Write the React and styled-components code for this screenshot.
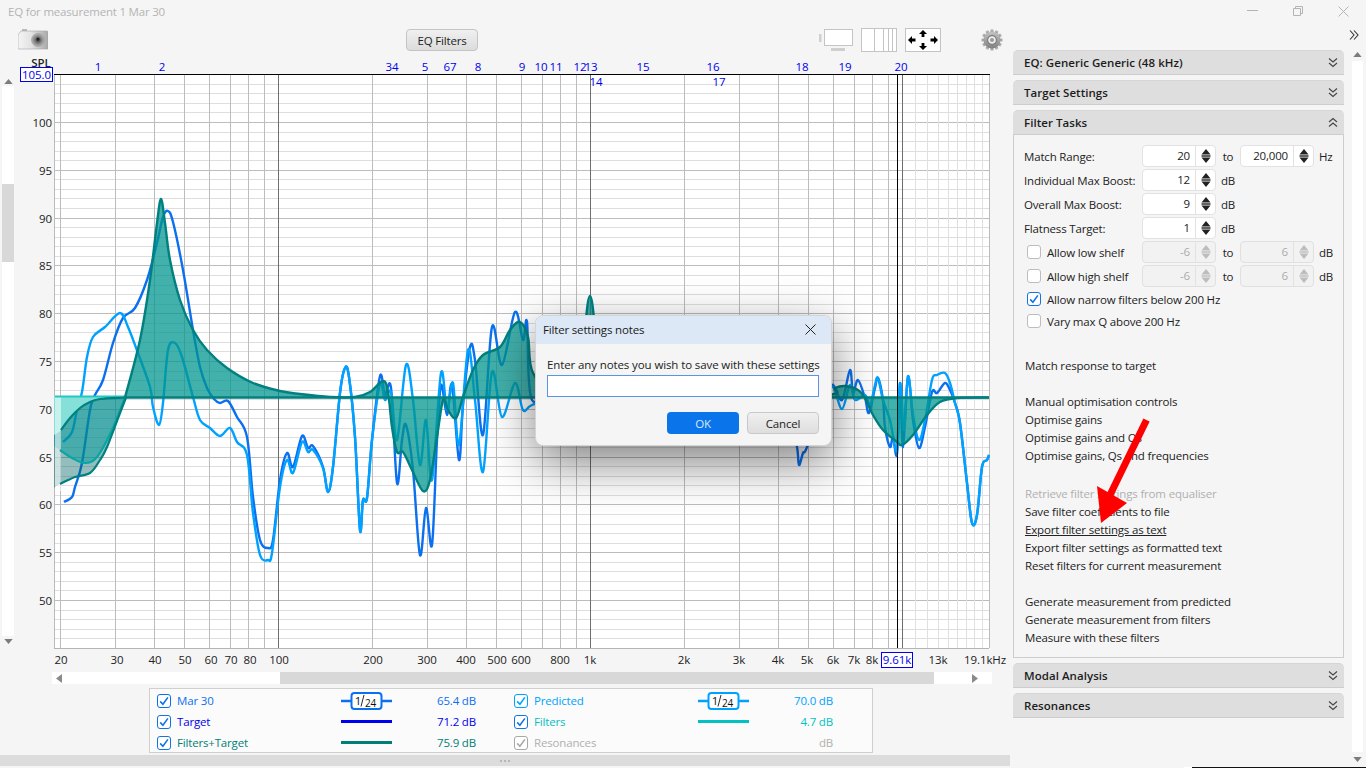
import React from 'react';
import styled, { createGlobalStyle } from 'styled-components';

const Global = createGlobalStyle`
  html, body { margin: 0; padding: 0; background: #f5f5f5; overflow: hidden; }
  * { box-sizing: border-box; }
`;

const FONT = `"Open Sans", "Noto Sans", "Liberation Sans", sans-serif`;

const Page = styled.div`
  position: relative;
  width: 1366px;
  height: 768px;
  overflow: hidden;
  background: #f5f5f5;
  font: 11.5px ${FONT};
  letter-spacing: -0.17px;
  color: #222;
  display: flex;
  flex-direction: column;
`;
const TitleBar = styled.div`
  height: 22px;
  flex: none;
  display: flex;
  align-items: center;
  justify-content: space-between;
  padding: 0 17px 0 8px;
`;
const Title = styled.div`
  color: #b4b4b4;
  font-size: 11.5px;
  letter-spacing: -0.2px;
  padding-top: 1px;
`;
const WinControls = styled.div`
  display: flex;
  align-items: center;
  gap: 35px;
  color: #b0b0b0;
`;
const Main = styled.div`
  flex: 1;
  display: flex;
  min-height: 0;
`;
const LeftColumn = styled.div`
  width: 1010px;
  flex: none;
  display: flex;
  flex-direction: column;
`;
const Toolbar = styled.div`
  height: 36px;
  flex: none;
  display: flex;
  align-items: flex-start;
  padding: 6px 0 0 18px;
`;
const ToolButton = styled.div`
  margin-left: 358px;
  margin-top: 1px;
  width: 72px;
  height: 22px;
  border: 1px solid #c4c4c4;
  border-radius: 4px;
  background: linear-gradient(#f0f0f0, #dcdcdc);
  display: flex;
  align-items: center;
  justify-content: center;
  color: #222;
`;
const MonitorSlot = styled.div`
  margin-left: 341px;
  width: 34px;
  height: 24px;
`;
const ColumnsSlot = styled.div`
  margin-left: 8px;
  width: 36px;
  height: 24px;
`;
const MoveSlot = styled.div`
  margin-left: 8px;
  width: 36px;
  height: 24px;
  background: #fff;
  border: 1px solid #c4c4c4;
`;
const GearSlot = styled.div`
  margin-left: 40px;
  margin-top: 1px;
  width: 22px;
  height: 22px;
`;
const ChartRow = styled.div`
  height: 612px;
  flex: none;
  display: flex;
`;
const VScroll = styled.div`
  width: 14px;
  flex: none;
  padding: 18px 0 24px 2px;
  display: flex;
  flex-direction: column;
  align-items: stretch;
`;
const ArrowCell = styled.div`
  height: 10px;
  flex: none;
  display: flex;
  align-items: center;
  justify-content: center;
`;
const VTrack = styled.div`
  flex: 1;
  background: #fff;
  padding-top: 98px;
`;
const VThumb = styled.div`
  height: 78px;
  background: #d8d8d8;
`;
const HScroll = styled.div`
  margin: 2px 0 0 52px;
  width: 940px;
  height: 12px;
  flex: none;
  display: flex;
  align-items: center;
  background: #fff;
`;
const HArrow = styled.div`
  width: 14px;
  flex: none;
  display: flex;
  justify-content: center;
`;
const HThumb = styled.div`
  height: 12px;
  width: 654px;
  margin: 0 34px 0 214px;
  background: #d8d8d8;
`;
const Legend = styled.div`
  margin: 4px 0 0 149px;
  width: 724px;
  height: 65px;
  flex: none;
  border: 1px solid #cfcfcf;
  background: #fbfbfb;
  padding: 1px 0 0 7px;
  display: grid;
  grid-template-columns: 319px 319px;
  grid-auto-rows: 21px;
  column-gap: 38px;
`;
const LegendEntry = styled.div`
  display: grid;
  grid-template-columns: 14px 170px 51px 84px;
  column-gap: 0;
  align-items: center;
  color: ${p => p.$color};
`;
const LegendName = styled.span`
  padding-left: 6px;
`;
const LegendValue = styled.span`
  text-align: right;
`;
const LineSwatch = styled.div`
  height: 3px;
  background: ${p => p.$color};
`;
const Splitter = styled.div`
  margin-top: 2px;
  height: 11px;
  flex: none;
  background: #dcdcdc;
  display: flex;
  align-items: center;
  justify-content: center;
  gap: 2px;
`;
const SplitDot = styled.i`
  width: 2px;
  height: 2px;
  border-radius: 50%;
  background: #aaa;
`;

const Sidebar = styled.div`
  flex: 1;
  display: flex;
  min-width: 0;
`;
const Panels = styled.div`
  margin: 28px 0 0 3px;
  width: 331px;
  display: flex;
  flex-direction: column;
  gap: 5px;
`;
const PanelHeader = styled.div`
  height: 25px;
  background: #dedede;
  border-radius: 5px 5px 0 0;
  border-top: 1px solid #d6d6d6;
  border-bottom: 1px solid #cdcdcd;
  display: flex;
  align-items: center;
  justify-content: space-between;
  padding: 0 6px 0 11px;
  font-weight: 600;
  font-size: 11.5px;
  letter-spacing: 0.05px;
  color: #1c1c1c;
`;
const PanelBody = styled.div`
  height: 523px;
  border: 1px solid #cdcdcd;
  border-top: none;
  padding: 9px 0 0 10px;
`;
const FieldRow = styled.div`
  height: 24px;
  display: flex;
  align-items: center;
`;
const FieldLabel = styled.div`
  width: 118px;
  flex: none;
  white-space: nowrap;
`;
const CheckLabel = styled.label`
  width: 118px;
  flex: none;
  display: flex;
  align-items: center;
  gap: 6px;
  padding-left: 3px;
  white-space: nowrap;
`;
const CheckRow = styled.label`
  height: 22px;
  display: flex;
  align-items: center;
  gap: 6px;
  padding-left: 3px;
`;
const SpinBox = styled.div`
  width: 74px;
  height: 22px;
  flex: none;
  display: flex;
  border: 1px solid ${p => (p.$off ? '#e0e0e0' : '#e2e2e2')};
  border-radius: 4px;
  background: ${p => (p.$off ? '#f2f2f2' : '#fff')};
  color: ${p => (p.$off ? '#ababab' : '#222')};
`;
const SpinValue = styled.div`
  flex: 1;
  text-align: right;
  line-height: 20px;
  padding-right: 5px;
`;
const SpinArrows = styled.div`
  width: 20px;
  flex: none;
  border-left: 1px solid #e2e2e2;
  display: flex;
  align-items: center;
  justify-content: center;
  color: ${p => (p.$off ? '#bdbdbd' : '#222')};
`;
const ToWord = styled.div`
  width: 24px;
  flex: none;
  text-align: center;
`;
const Unit = styled.div`
  margin-left: 5px;
`;
const ActionGroup = styled.div`
  margin-top: ${p => p.$gap}px;
  margin-left: 1px;
`;
const Action = styled.div`
  height: 18px;
  line-height: 18px;
  white-space: nowrap;
  color: ${p => (p.$off ? '#b0b0b0' : '#222')};
  text-decoration: ${p => (p.$link ? 'underline' : 'none')};
`;
const SideScroll = styled.div`
  width: 22px;
  display: flex;
  flex-direction: column;
  align-items: flex-start;
  padding: 7px 0 0 8px;
`;
const Collapse = styled.div`
  height: 14px;
  margin-left: -3px;
  display: flex;
  justify-content: center;
`;
const SideArrow = styled.div`
  width: 11px;
  height: 14px;
  margin-top: ${p => p.$top || 0}px;
  display: flex;
  align-items: center;
  justify-content: center;
`;
const SideTrack = styled.div`
  width: 11px;
  height: 691px;
  background: #fff;
`;
const TaskbarEdge = styled.div`
  position: absolute;
  right: 0;
  bottom: 0;
  width: 174px;
  height: 1px;
  background: #111;
  box-shadow: -8px 0 0 #fff;
`;

const Dialog = styled.div`
  position: absolute;
  left: 535px;
  top: 315px;
  width: 297px;
  height: 131px;
  border-radius: 8px;
  background: #f5f5f5;
  border: 1px solid #d4d4d4;
  box-shadow: 0 16px 48px rgba(0, 0, 0, 0.5);
  overflow: hidden;
  display: flex;
  flex-direction: column;
`;
const DialogTitle = styled.div`
  height: 28px;
  flex: none;
  background: #dce8f6;
  display: flex;
  align-items: center;
  justify-content: space-between;
  padding: 0 15px 1px 7px;
  font-size: 11.5px;
  color: #1a1a1a;
`;
const DialogBody = styled.div`
  padding: 13px 12px 0 11px;
`;
const DialogLabel = styled.div`
  line-height: 16px;
  white-space: nowrap;
  letter-spacing: -0.11px;
`;
const NotesInput = styled.div`
  margin-top: 2px;
  height: 22px;
  background: #fff;
  border: 1.5px solid #5a94e6;
`;
const DialogButtons = styled.div`
  margin-top: 15px;
  display: flex;
  justify-content: flex-end;
  gap: 8px;
`;
const DialogButton = styled.div`
  width: 72px;
  height: 22px;
  border-radius: 4px;
  display: flex;
  align-items: center;
  justify-content: center;
  ${p =>
    p.$primary
      ? 'background: #0a74ea; color: #dbe9fb;'
      : 'background: linear-gradient(#f0f0f0, #dedede); border: 1px solid #c8c8c8; color: #222;'}
`;
const ArrowOverlay = styled.svg`
  position: absolute;
  left: 1090px;
  top: 410px;
`;

const AxisText = styled.text`
  font: 11.5px ${FONT};
  letter-spacing: -0.1px;
  fill: ${p => p.$fill || '#222'};
  text-anchor: ${p => p.$anchor || 'middle'};
`;
const SplText = styled(AxisText)`
  font-weight: 600;
`;

/* ---------- chart geometry ---------- */
const fx = f => 278 + (Math.log10(f) - 2) * 312;
const dy = db => 122 + (100 - db) * 9.56;
const L = 54, R = 989, T = 74, B = 648;

function smooth(pts) {
  let d = `M${pts[0][0]},${pts[0][1]}`;
  for (let i = 0; i < pts.length - 1; i++) {
    const p0 = pts[i - 1] || pts[i], p1 = pts[i], p2 = pts[i + 1], p3 = pts[i + 2] || p2;
    const c1 = [p1[0] + (p2[0] - p0[0]) / 6, p1[1] + (p2[1] - p0[1]) / 6];
    const c2 = [p2[0] - (p3[0] - p1[0]) / 6, p2[1] - (p3[1] - p1[1]) / 6];
    d += `C${c1[0].toFixed(1)},${c1[1].toFixed(1)} ${c2[0].toFixed(1)},${c2[1].toFixed(1)} ${p2[0]},${p2[1]}`;
  }
  return d;
}

const darkPts = [[64,502],[72,497],[75,487],[82,463],[90,410],[95,395],[103,380],[113,343],[123,318],[135,308],[147,280],[157,243],[163,217],[168,211],[173,222],[183,270],[193,330],[200,367],[207,388],[214,399],[220,403],[228,401],[237,417],[247,437],[253,497],[260,540],[268,548],[273,540],[280,480],[287,453],[293,467],[302,436],[308,448],[313,446],[323,467],[328,492],[333,467],[340,393],[345,368],[349,377],[355,437],[360,530],[363,500],[367,498],[372,440],[380,376],[385,395],[391,388],[397,483],[402,440],[406,425],[413,470],[420,555],[426,508],[432,545],[437,440],[441,385],[447,415],[452,385],[459,460],[463,405],[470,347],[475,360],[483,435],[492,327],[502,365],[515,312],[523,340],[527,322],[532,400],[560,380],[590,390],[620,390],[700,400],[790,420],[797,447],[799,465],[803,453],[807,447],[825,395],[833,385],[842,400],[850,370],[853,393],[858,380],[865,398],[869,413],[875,388],[878,378],[883,400],[885,427],[890,447],[893,437],[897,454],[900,383],[903,447],[908,377],[913,420],[919,448],[925,427],[932,392],[937,393],[945,383],[950,390],[955,403],[960,423],[967,483],[972,523],[977,515],[982,467],[987,460],[989,455]];

const lightPts = [[63,442],[72,432],[77,410],[82,392],[87,357],[93,337],[105,327],[120,313],[128,327],[138,353],[150,387],[153,407],[159,425],[163,403],[168,350],[175,343],[182,357],[193,397],[200,420],[210,428],[220,436],[230,428],[237,442],[247,455],[253,513],[260,555],[268,560],[272,553],[280,487],[287,460],[293,473],[302,442],[308,452],[313,450],[323,468],[328,492],[333,467],[340,393],[345,368],[349,377],[355,437],[360,530],[363,500],[367,498],[372,440],[380,384],[385,400],[391,392],[397,440],[406,365],[413,400],[420,465],[426,420],[432,480],[441,373],[447,410],[453,383],[459,445],[468,350],[475,400],[483,472],[492,372],[502,417],[515,383],[523,410],[532,405],[560,395],[590,400],[620,395],[700,405],[790,425],[797,440],[805,430],[825,395],[833,387],[842,409],[850,385],[855,400],[865,395],[870,405],[875,385],[878,378],[883,400],[890,420],[897,450],[900,383],[904,430],[908,376],[913,415],[919,440],[925,420],[932,380],[937,375],[945,373],[950,383],[955,403],[960,423],[967,483],[972,523],[977,515],[982,467],[987,460],[989,455]];

const tealPts = [[125,397.5],[140,340],[150,280],[157,223],[161,199],[165,223],[170,260],[180,300],[193,330],[207,350],[227,368],[253,383],[280,391],[300,394],[330,397],[355,397],[370,392],[383,381],[388,392],[392,427],[397,452],[403,452],[412,470],[423,491],[430,480],[437,437],[443,400],[448,410],[456,418],[463,397],[473,370],[483,355],[500,347],[510,330],[520,322],[528,337],[533,373],[560,397],[580,360],[590,296],[600,360],[620,397],[700,397],[825,395],[835,388],[845,386],[858,390],[865,398],[873,415],[883,430],[897,442],[902,445],[913,435],[927,415],[940,402],[957,398],[989,397.5]];

const arc = [[54,435],[61,430],[70,418],[80,408],[90,402],[100,399],[125,397.5]];
const mid = [[54,446],[60,450],[72,458],[85,463],[97,457],[112,430],[125,397.5]];
const low = [[54,488],[60,484],[75,477],[90,473],[100,460],[107,447],[120,413],[126,397.5]];

const tail = pts => smooth(pts).slice(1);
const reversed = pts => [...pts].reverse();

const majorX = [20,30,40,50,60,70,80,90,200,300,400,500,600,700,800,900,2000,3000,4000,5000,6000,7000,8000,9000];
const lightX = [11000,12000,13000,14000,15000,16000,17000,18000,19000];
const darkX = [100,1000,10000];

const markers = [
  ['1',98,67],['2',162,67],['34',392,67],['5',425,67],['67',450,67],['8',478,67],['9',522,67],['10',541,67],['11',556,67],['12',580,67],['13',591,67],['14',596,82],['15',643,67],['16',713,67],['17',719,82],['18',802,67],['19',845,67],['20',901,67],
];
const xLabels = [['20',61],['30',117],['40',155],['50',185],['60',211],['70',231],['80',250],['100',279],['200',373],['300',427],['400',466],['500',497],['600',521],['800',560],['1k',590],['2k',684],['3k',739],['4k',778],['5k',807],['6k',833],['7k',854],['8k',872],['13k',938]];

function Chart() {
  const hLines = [];
  for (let db = 105; db >= 45; db--) hLines.push(db);
  return (
    <svg width="996" height="612" viewBox="14 58 996 612" style={{ display: 'block' }}>
      <rect x={L} y={T} width={R - L} height={B - T} fill="#fff" />
      {hLines.map(db => (
        <line key={db} x1={L} x2={R} y1={Math.round(dy(db)) + 0.5} y2={Math.round(dy(db)) + 0.5}
          stroke={db % 5 === 0 ? '#bcbcbc' : '#dedede'} />
      ))}
      {lightX.map(f => <line key={f} x1={Math.round(fx(f)) + 0.5} x2={Math.round(fx(f)) + 0.5} y1={T} y2={B} stroke="#e0e0e0" />)}
      {majorX.map(f => <line key={f} x1={Math.round(fx(f)) + 0.5} x2={Math.round(fx(f)) + 0.5} y1={T} y2={B} stroke="#bcbcbc" />)}
      {darkX.map(f => <line key={f} x1={Math.round(fx(f)) + 0.5} x2={Math.round(fx(f)) + 0.5} y1={T} y2={B} stroke="#6e6e6e" />)}
      <line x1={L + 0.5} x2={L + 0.5} y1={T} y2={B} stroke="#bcbcbc" />
      <line x1={R + 0.5} x2={R + 0.5} y1={T} y2={B} stroke="#bcbcbc" />
      <line x1={L} x2={R} y1={B + 0.5} y2={B + 0.5} stroke="#b4b4b4" />
      <line x1="897.5" x2="897.5" y1={T} y2={B} stroke="#000" />
      <line x1={L} x2={R + 1} y1={T + 0.5} y2={T + 0.5} stroke="#000" />

      <path d={smooth(darkPts)} fill="none" stroke="#0b70f0" strokeWidth="2.4" />
      <path d={smooth(lightPts)} fill="none" stroke="#00a2ff" strokeWidth="2.4" />

      <path d={`${smooth(arc)}L125,396L54,396Z`} fill="#86e0da" />
      <path d={`${smooth(arc)}${tail(reversed(mid)).replace(/^[\d.,]+/, '')}Z`} fill="rgba(0,140,138,0.72)" />
      <path d={`${smooth(mid)}${tail(reversed(low)).replace(/^[\d.,]+/, '')}Z`} fill="rgba(0,100,100,0.42)" />
      <rect x={L + 1} y="396" width="6" height="95" fill="rgba(255,255,255,0.55)" />
      <path d={`${smooth(tealPts)}L125,397.5Z`} fill="rgba(0,148,142,0.74)" />

      <line x1={L + 1} x2="126" y1="396.5" y2="396.5" stroke="#22c8c0" strokeWidth="2" />
      <path d={smooth(mid.slice(1))} fill="none" stroke="#0aa5a5" strokeWidth="2.2" />
      <path d={smooth(arc.slice(1))} fill="none" stroke="#008080" strokeWidth="2.2" />
      <path d={smooth(low.slice(1))} fill="none" stroke="#008080" strokeWidth="2.2" />
      <path d={smooth(tealPts)} fill="none" stroke="#008080" strokeWidth="2.4" />
      <line x1="125" x2={R} y1="397.5" y2="397.5" stroke="#008080" strokeWidth="2.6" />

      <line x1="897.5" x2="897.5" y1="395" y2={B} stroke="rgba(0,0,0,0.8)" />

      {markers.map(([t, x, y]) => (
        <AxisText key={t} x={x} y={y + 4} $fill="#0000ee">{t}</AxisText>
      ))}
      {[100,95,90,85,80,75,70,65,60,55,50].map(db => (
        <AxisText key={db} x="52" y={dy(db) + 5} $anchor="end">{db}</AxisText>
      ))}
      <SplText x="41" y="66.5">SPL</SplText>
      <rect x="20.5" y="67.5" width="32" height="14" fill="#fff" stroke="#0000ee" />
      <AxisText x="36.5" y="79" $fill="#0000ee">105.0</AxisText>

      {xLabels.map(([t, x]) => <AxisText key={t} x={x} y="664">{t}</AxisText>)}
      <rect x="881.5" y="652.5" width="31" height="15" fill="#fff" stroke="#0000ee" />
      <AxisText x="897" y="664" $fill="#0000ee">9.61k</AxisText>
      <AxisText x="1006" y="664" $anchor="end">19.1kHz</AxisText>
    </svg>
  );
}

/* ---------- icons ---------- */
const Camera = () => (
  <svg width="30" height="21" viewBox="0 0 30 21" style={{ display: 'block', marginTop: 1 }}>
    <defs>
      <linearGradient id="camBody" x1="0" x2="1" y1="0" y2="0">
        <stop offset="0" stopColor="#f4f4f4" />
        <stop offset="0.45" stopColor="#e2e2e2" />
        <stop offset="1" stopColor="#a8a8a8" />
      </linearGradient>
      <radialGradient id="camLens">
        <stop offset="0" stopColor="#333" />
        <stop offset="0.45" stopColor="#777" />
        <stop offset="1" stopColor="#b8b8b8" />
      </radialGradient>
    </defs>
    <rect x="4" y="0" width="5" height="3" fill="#bbb" />
    <path d="M3 2H29a1 1 0 0 1 1 1V20H1Q0 20 0 19V6Z" fill="url(#camBody)" stroke="#a4a4a4" strokeWidth=".6" />
    <circle cx="20" cy="11" r="6.5" fill="url(#camLens)" stroke="#8c8c8c" strokeWidth=".5" />
    <circle cx="20" cy="10" r="1.5" fill="#222" />
  </svg>
);

const Monitor = () => (
  <svg width="34" height="24" viewBox="0 0 34 24" style={{ display: 'block' }}>
    <rect x="0" y="6" width="2.5" height="8" fill="#d0d0d0" />
    <rect x="5.5" y="1.5" width="28" height="16" fill="#fff" stroke="#c4c4c4" />
    <rect x="12" y="20" width="14" height="3" fill="#cfcfcf" />
  </svg>
);
const Columns = () => (
  <svg width="36" height="24" viewBox="0 0 36 24" style={{ display: 'block' }}>
    <rect x=".5" y=".5" width="35" height="23" fill="#fff" stroke="#c4c4c4" />
    {[13.5, 22.5, 27.5, 31.5].map(x => <line key={x} x1={x} x2={x} y1="0" y2="24" stroke="#c4c4c4" />)}
  </svg>
);
const MoveArrows = () => (
  <svg width="34" height="22" viewBox="0 0 34 22" style={{ display: 'block' }}>
    <g fill="#000">
      <path d="M17 1l4 4h-2.6v3h-2.8V5H13Z" />
      <path d="M17 21l4-4h-2.6v-3h-2.8v3H13Z" />
      <path d="M2 11l4-4v2.6h3.5v2.8H6V15Z" />
      <path d="M32 11l-4-4v2.6h-3.5v2.8H28V15Z" />
    </g>
  </svg>
);
const Gear = () => {
  const teeth = Array.from({ length: 12 }, (_, i) => i * 30);
  return (
    <svg width="22" height="22" viewBox="0 0 22 22" style={{ display: 'block' }}>
      <defs>
        <linearGradient id="gearFill" x1="0" x2="0" y1="0" y2="1">
          <stop offset="0" stopColor="#c4c4c4" />
          <stop offset="1" stopColor="#808080" />
        </linearGradient>
      </defs>
      {teeth.map(a => (
        <rect key={a} x="9.4" y="0.3" width="3.2" height="4" rx=".6" fill="url(#gearFill)" transform={`rotate(${a} 11 11)`} />
      ))}
      <circle cx="11" cy="11" r="8.4" fill="url(#gearFill)" />
      <circle cx="11" cy="11" r="4.4" fill="#eee" stroke="#7c7c7c" strokeWidth="1.2" />
      <circle cx="11" cy="11" r="2" fill="#999" />
    </svg>
  );
};
const Tri = ({ dir = 'up', color = '#7c7c7c', w = 9, h = 5 }) => (
  <svg width={w} height={h} viewBox="0 0 10 6" style={{ display: 'block' }}>
    <path d={dir === 'up' ? 'M5 0L10 6H0Z' : 'M5 6L10 0H0Z'} fill={color} />
  </svg>
);
const HTri = ({ left }) => (
  <svg width="6" height="9" viewBox="0 0 6 9" style={{ display: 'block' }}>
    <path d={left ? 'M0 4.5L6 0V9Z' : 'M6 4.5L0 0V9Z'} fill="#8a8a8a" />
  </svg>
);
const Double = ({ up }) => (
  <svg width="10" height="11" viewBox="0 0 10 11" style={{ display: 'block' }}>
    <g fill="none" stroke="#444" strokeWidth="1.1">
      {up ? (
        <><path d="M1 5L5 1.5L9 5" /><path d="M1 9.5L5 6L9 9.5" /></>
      ) : (
        <><path d="M1 1.5L5 5L9 1.5" /><path d="M1 6L5 9.5L9 6" /></>
      )}
    </g>
  </svg>
);
const SpinGlyph = () => (
  <svg width="10" height="14" viewBox="0 0 10 14" style={{ display: 'block' }}>
    <path d="M5 0L9.5 5.5H.5Z M5 14L9.5 8.5H.5Z" fill="currentColor" />
    <rect x=".5" y="6.3" width="9" height="1.4" fill="currentColor" />
  </svg>
);
const CheckBoxShell = styled.span`
  width: 14px;
  height: 14px;
  flex: none;
  border: 1px solid ${p => p.$color || '#bdbdbd'};
  border-radius: 3px;
  background: #fff;
  display: inline-flex;
  align-items: center;
  justify-content: center;
`;
const Check = ({ on, color }) => (
  <CheckBoxShell $color={on ? color || '#1173e6' : '#bdbdbd'}>
    {on && (
      <svg width="10" height="10" viewBox="0 0 10 10">
        <path d="M1.2 5.4L3.9 8.2L8.9 1.4" fill="none" stroke={color || '#1173e6'} strokeWidth="1.6" />
      </svg>
    )}
  </CheckBoxShell>
);
const Smoothing = ({ color }) => (
  <svg width="51" height="18" viewBox="0 0 51 18" style={{ display: 'block' }}>
    <line x1="0" x2="51" y1="9" y2="9" stroke={color} strokeWidth="2.4" />
    <rect x="10.5" y="1" width="30" height="16" rx="3" fill="#fff" stroke={color} strokeWidth="2" />
    <AxisText x="17" y="13" $fill="#111">1</AxisText>
    <line x1="20" x2="23" y1="14.5" y2="3" stroke="#111" strokeWidth=".9" />
    <text x="24" y="15" fill="#111" style={{ font: `10px ${FONT}` }}>24</text>
  </svg>
);

const Spin = ({ value, off }) => (
  <SpinBox $off={off}>
    <SpinValue>{value}</SpinValue>
    <SpinArrows $off={off}><SpinGlyph /></SpinArrows>
  </SpinBox>
);

const legendItems = [
  ['Mar 30', '#0b70f0', 'smooth', '65.4 dB', '#0b70f0'],
  ['Predicted', '#00a2ff', 'smooth', '70.0 dB', '#00a2ff'],
  ['Target', '#0000f0', 'line', '71.2 dB', '#1173e6'],
  ['Filters', '#00c2c2', 'line', '4.7 dB', '#1173e6'],
  ['Filters+Target', '#007f78', 'line', '75.9 dB', '#1173e6'],
  ['Resonances', '#b0b0b0', null, 'dB', '#a8a8a8'],
];

export default function App() {
  return (
    <Page>
      <Global />
      <TitleBar>
        <Title>EQ for measurement 1 Mar 30</Title>
        <WinControls>
          <svg width="11" height="2" viewBox="0 0 11 2"><rect width="11" height="1" fill="#b4b4b4" /></svg>
          <svg width="10" height="10" viewBox="0 0 10 10"><path d="M.5 2.5H7.5V9.5H.5ZM2.5 2.5V.5H9.5V7.5H7.5" fill="none" stroke="#b4b4b4" /></svg>
          <svg width="11" height="11" viewBox="0 0 11 11"><path d="M.5 .5L10.5 10.5M10.5 .5L.5 10.5" stroke="#b4b4b4" /></svg>
        </WinControls>
      </TitleBar>
      <Main>
        <LeftColumn>
          <Toolbar>
            <Camera />
            <ToolButton>EQ Filters</ToolButton>
            <MonitorSlot><Monitor /></MonitorSlot>
            <ColumnsSlot><Columns /></ColumnsSlot>
            <MoveSlot><MoveArrows /></MoveSlot>
            <GearSlot><Gear /></GearSlot>
          </Toolbar>
          <ChartRow>
            <VScroll>
              <ArrowCell><Tri dir="up" /></ArrowCell>
              <VTrack><VThumb /></VTrack>
              <ArrowCell><Tri dir="down" /></ArrowCell>
            </VScroll>
            <Chart />
          </ChartRow>
          <HScroll>
            <HArrow><HTri left /></HArrow>
            <HThumb />
            <HArrow><HTri /></HArrow>
          </HScroll>
          <Legend>
            {legendItems.map(([name, color, kind, value, checkColor]) => (
              <LegendEntry key={name} $color={color}>
                <Check on color={checkColor} />
                <LegendName>{name}</LegendName>
                {kind === 'smooth' ? <Smoothing color={color} /> : kind === 'line' ? <LineSwatch $color={color} /> : <span />}
                <LegendValue>{value}</LegendValue>
              </LegendEntry>
            ))}
          </Legend>
          <Splitter><SplitDot /><SplitDot /><SplitDot /></Splitter>
        </LeftColumn>
        <Sidebar>
          <Panels>
            <PanelHeader>EQ: Generic Generic (48 kHz)<Double /></PanelHeader>
            <PanelHeader>Target Settings<Double /></PanelHeader>
            <div>
              <PanelHeader>Filter Tasks<Double up /></PanelHeader>
              <PanelBody>
                <FieldRow>
                  <FieldLabel>Match Range:</FieldLabel>
                  <Spin value="20" /><ToWord>to</ToWord><Spin value="20,000" /><Unit>Hz</Unit>
                </FieldRow>
                <FieldRow><FieldLabel>Individual Max Boost:</FieldLabel><Spin value="12" /><Unit>dB</Unit></FieldRow>
                <FieldRow><FieldLabel>Overall Max Boost:</FieldLabel><Spin value="9" /><Unit>dB</Unit></FieldRow>
                <FieldRow><FieldLabel>Flatness Target:</FieldLabel><Spin value="1" /><Unit>dB</Unit></FieldRow>
                <FieldRow>
                  <CheckLabel><Check />Allow low shelf</CheckLabel>
                  <Spin value="-6" off /><ToWord>to</ToWord><Spin value="6" off /><Unit>dB</Unit>
                </FieldRow>
                <FieldRow>
                  <CheckLabel><Check />Allow high shelf</CheckLabel>
                  <Spin value="-6" off /><ToWord>to</ToWord><Spin value="6" off /><Unit>dB</Unit>
                </FieldRow>
                <CheckRow><Check on />Allow narrow filters below 200 Hz</CheckRow>
                <CheckRow><Check />Vary max Q above 200 Hz</CheckRow>
                <ActionGroup $gap={25}>
                  <Action>Match response to target</Action>
                </ActionGroup>
                <ActionGroup $gap={18}>
                  <Action>Manual optimisation controls</Action>
                  <Action>Optimise gains</Action>
                  <Action>Optimise gains and Qs</Action>
                  <Action>Optimise gains, Qs and frequencies</Action>
                </ActionGroup>
                <ActionGroup $gap={20}>
                  <Action $off>Retrieve filter settings from equaliser</Action>
                  <Action>Save filter coefficients to file</Action>
                  <Action $link>Export filter settings as text</Action>
                  <Action>Export filter settings as formatted text</Action>
                  <Action>Reset filters for current measurement</Action>
                </ActionGroup>
                <ActionGroup $gap={18}>
                  <Action>Generate measurement from predicted</Action>
                  <Action>Generate measurement from filters</Action>
                  <Action>Measure with these filters</Action>
                </ActionGroup>
              </PanelBody>
            </div>
            <PanelHeader>Modal Analysis<Double /></PanelHeader>
            <PanelHeader>Resonances<Double /></PanelHeader>
          </Panels>
          <SideScroll>
            <Collapse>
              <svg width="10" height="12" viewBox="0 0 10 12">
                <path d="M1 1.5L5 6L1 10.5M5 1.5L9 6L5 10.5" fill="none" stroke="#333" strokeWidth="1.1" />
              </svg>
            </Collapse>
            <SideArrow $top={4}><Tri dir="up" /></SideArrow>
            <SideTrack />
            <SideArrow><Tri dir="down" /></SideArrow>
          </SideScroll>
        </Sidebar>
      </Main>

      <Dialog>
        <DialogTitle>
          Filter settings notes
          <svg width="11" height="11" viewBox="0 0 11 11"><path d="M.5 .5L10.5 10.5M10.5 .5L.5 10.5" stroke="#222" /></svg>
        </DialogTitle>
        <DialogBody>
          <DialogLabel>Enter any notes you wish to save with these settings</DialogLabel>
          <NotesInput />
          <DialogButtons>
            <DialogButton $primary>OK</DialogButton>
            <DialogButton>Cancel</DialogButton>
          </DialogButtons>
        </DialogBody>
      </Dialog>

      <ArrowOverlay width="64" height="120" viewBox="1090 410 64 120">
        <path d="M1146.5 420L1109 497" stroke="#ff0000" strokeWidth="7" fill="none" />
        <path d="M1097 486L1127 503L1101 523Z" fill="#ff0000" />
      </ArrowOverlay>
      <TaskbarEdge />
    </Page>
  );
}
